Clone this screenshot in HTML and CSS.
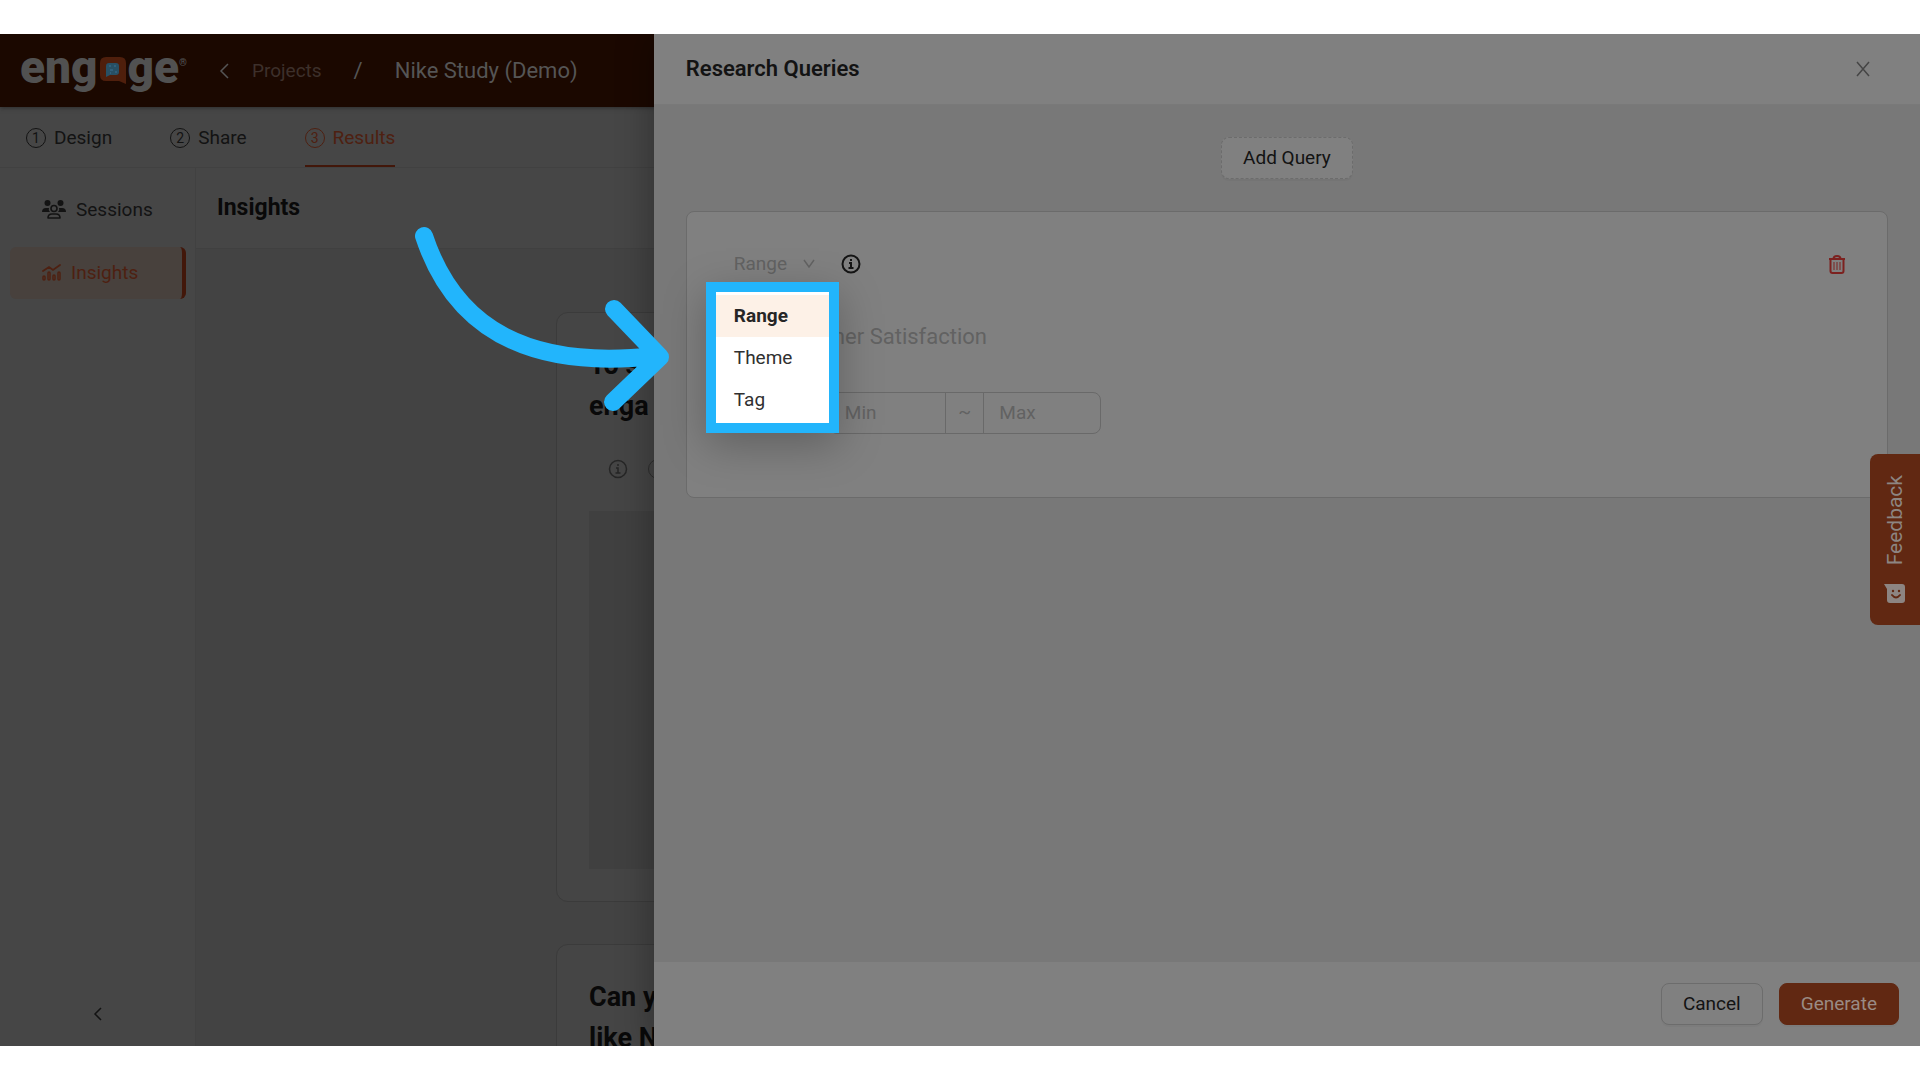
FILE: index.html
```
<!DOCTYPE html>
<html lang="en">
<head>
<meta charset="utf-8">
<meta name="viewport" content="width=device-width, initial-scale=1">
<title>Engage – Research Queries</title>
<link rel="stylesheet" href="styles.css">
</head>
<body>
<div class="stage">
  <div class="app">
    <header class="topbar">
      <a class="logo" href="#" aria-label="engage">
        <span>eng</span>
        <svg class="logo-mark" width="26" height="27" viewBox="0 0 26 27" aria-hidden="true">
          <path d="M6 0h14q6 0 6 6v21l-7-3H6q-6 0-6-6V6q0-6 6-6z" fill="#4f1f0c"/>
          <path d="M9 6h7q3 0 3 3v6q0 3-3 3h-6l-4 2V9q0-3 3-3z" fill="#285064"/>
          <path d="M9 9h2m3 0h2m-6 4h3m2 2h2m-7 1h1" stroke="#3a7191" stroke-width="1"/>
        </svg>
        <span>ge</span><sup>®</sup>
      </a>
      <nav class="crumbs">
        <a class="crumb-back" href="#">
          <svg width="10" height="16" viewBox="0 0 10 16" aria-hidden="true"><path d="M9 1L2 8l7 7" /></svg>
          <span>Projects</span>
        </a>
        <span class="slash">/</span>
        <span class="crumb-current">Nike Study (Demo)</span>
      </nav>
    </header>
    <nav class="tabs">
      <a class="tab" href="#"><span class="num">1</span>Design</a>
      <a class="tab" href="#"><span class="num">2</span>Share</a>
      <a class="tab active" href="#"><span class="num">3</span>Results</a>
    </nav>
    <div class="columns">
      <aside class="sidebar">
        <a class="side-item" href="#">
          <svg width="24" height="20" viewBox="0 0 24 20" aria-hidden="true">
            <circle cx="5.500" cy="3" r="3" fill="currentColor"/><circle cx="18.500" cy="3" r="3" fill="currentColor"/>
            <path d="M0 12q0-4 4-4h3q-1 2 1 4zM24 12q0-4-4-4h-3q1 2-1 4z" fill="currentColor"/>
            <circle cx="12" cy="8.500" r="3" fill="none" stroke="currentColor" stroke-width="1.600"/>
            <path d="M6 18q0-4 4-4h4q4 0 4 4z" fill="none" stroke="currentColor" stroke-width="1.600" stroke-linejoin="round"/>
          </svg>
          Sessions
        </a>
        <a class="side-item selected" href="#">
          <svg width="19" height="18" viewBox="0 0 19 18" fill="none" stroke="currentColor" stroke-width="1.500" aria-hidden="true">
            <path d="M1 7l6-4 4 3 7-5" stroke-linecap="round" stroke-width="1.800"/>
            <rect x="1" y="12" width="2" height="4" rx="1"/><rect x="6" y="8" width="2" height="8" rx="1"/><rect x="11" y="11" width="2" height="5" rx="1"/><rect x="16" y="8" width="2" height="8" rx="1"/>
          </svg>
          Insights
        </a>
        <button class="collapse" type="button" aria-label="Collapse">
          <svg width="10" height="14" viewBox="0 0 10 14" aria-hidden="true"><path d="M8 1L2 7l6 6"/></svg>
        </button>
      </aside>
      <main class="content">
        <h1 class="page-title">Insights</h1>
        <div class="feed">
          <article class="question">
            <h2>To s<br>enga</h2>
            <div class="tools">
              <svg class="info" width="20" height="20" viewBox="0 0 20 20" aria-hidden="true"><circle cx="10" cy="10" r="8.500"/><path d="M10 5v2M8 9h2v5M7.500 14h5"/></svg>
              <span class="dot"></span>
            </div>
            <div class="placeholder"></div>
          </article>
          <article class="question">
            <h2>Can y<br>like N</h2>
          </article>
        </div>
      </main>
    </div>
  </div>

  <section class="drawer">
    <header class="drawer-head">
      <h2>Research Queries</h2>
      <button class="close" type="button" aria-label="Close"><svg width="14" height="16" viewBox="0 0 14 16" aria-hidden="true"><path d="M1 1l12 14M13 1L1 15"/></svg></button>
    </header>
    <div class="drawer-body">
      <button class="btn add" type="button">Add Query</button>
      <form class="query">
        <div class="query-top">
          <div class="type-wrap">
            <button class="type" type="button">Range
              <svg width="12" height="10" viewBox="0 0 12 10" aria-hidden="true"><path d="M1 1l5 7 5-7"/></svg>
            </button>
            <ul class="menu">
              <li><button class="option chosen" type="button">Range</button></li>
              <li><button class="option" type="button">Theme</button></li>
              <li><button class="option" type="button">Tag</button></li>
            </ul>
          </div>
          <svg class="info strong" width="20" height="20" viewBox="0 0 20 20" aria-hidden="true"><circle cx="10" cy="10" r="8.500"/><path d="M10 5v2M8 9h2v5M7.500 14h5"/></svg>
          <button class="trash" type="button" aria-label="Delete query">
            <svg width="16" height="19" viewBox="0 0 16 19" aria-hidden="true"><path d="M0 4h16M4.500 4q0-3 3.500-3t3.500 3M1.500 4v12q0 2 2 2h9q2 0 2-2V4"/><path class="thin" d="M5 7v8M8 7v8M11 7v8"/></svg>
          </button>
        </div>
        <input class="query-name" type="text" aria-label="Query name" placeholder="Ex. Customer Satisfaction">
        <div class="range">
          <input type="text" aria-label="Minimum" placeholder="Min">
          <span>~</span>
          <input type="text" aria-label="Maximum" placeholder="Max">
        </div>
      </form>
    </div>
    <footer class="drawer-foot">
      <button class="btn" type="button">Cancel</button>
      <button class="btn primary" type="button">Generate</button>
    </footer>
  </section>

  <button class="feedback" type="button">
    <span>Feedback</span>
    <svg width="22" height="20" viewBox="0 0 22 20" aria-hidden="true">
      <path d="M0 0h18q3 0 3 3v13q0 3-3 3H6q-3 0-3-3V5z" fill="#8d8582"/>
      <path d="M8 11q4 5 8 0" fill="none" stroke="#612812" stroke-width="2" stroke-linecap="round"/><circle cx="9" cy="7" r="1.200" fill="#612812"/><circle cx="15" cy="7" r="1.200" fill="#612812"/>
    </svg>
  </button>

  <svg class="arrow" width="260" height="200" viewBox="412 222 260 200" aria-hidden="true">
    <path d="M424 236C455 330 530 370 655 356M614 309l46 48-47 45"/>
  </svg>
</div>
</body>
</html>
```
FILE: styles.css
```
* { box-sizing: border-box; }
body {
  margin: 0;
  padding: 34px 0;
  background: #fff;
  color: #131313;
  font: 18px/28px Roboto, "Liberation Sans", sans-serif;
}
a { color: inherit; text-decoration: none; }
button, input { font: inherit; color: inherit; }
button { padding: 0; border: 0; background: none; }
h1, h2, ul { margin: 0; padding: 0; }
svg { flex: none; fill: none; }

.stage {
  position: relative;
  height: calc(100vh - 68px);
  overflow: hidden;
  background: #464646;
}
.app { display: flex; flex-direction: column; height: 100%; }

.topbar {
  display: flex;
  align-items: center;
  gap: 32px;
  flex: none;
  height: 73px;
  padding-left: 20px;
  background: #1b0800;
  box-shadow: 0 1px 4px #2c2c2c;
  z-index: 1;
}
.logo {
  display: flex;
  align-items: center;
  gap: 2px;
  color: #515151;
  font-size: 46px;
  font-weight: 900;
  line-height: 60px;
}
.logo span { margin-top: -8px; }
.logo sup { align-self: flex-start; font-size: 10px; line-height: 36px; margin-left: -2px; }
.crumbs { display: flex; align-items: center; gap: 32px; font-size: 22px; color: #555; }
.crumb-back { display: flex; align-items: center; gap: 23px; color: #3d302b; font-size: 19px; }
.crumb-back svg path { stroke: #555; stroke-width: 1.500; }

.tabs {
  display: flex;
  gap: 58px;
  flex: none;
  height: 61px;
  padding-left: 26px;
  border-bottom: 1px solid #414141;
  font-size: 19px;
}
.tab { display: flex; align-items: center; gap: 8px; padding-top: 4px; border-bottom: 2px solid transparent; }
.tab.active { color: #4e2011; border-color: #42170a; }
.num {
  display: grid;
  place-items: center;
  width: 20px;
  height: 20px;
  border: 1px solid;
  border-radius: 50%;
  font-size: 14px;
  line-height: 18px;
}

.columns { display: flex; flex: 1; min-height: 0; }
.sidebar {
  display: flex;
  flex-direction: column;
  gap: 11px;
  width: 196px;
  padding: 16px 9px 17px 10px;
  border-right: 1px solid #414141;
  font-size: 19px;
}
.side-item { display: flex; align-items: center; gap: 10px; height: 52px; padding-left: 32px; border-radius: 6px; }
.selected { background: #48413d; color: #4e2011; border-right: 4px solid #42170a; }
.collapse { margin-top: auto; }
.collapse path { stroke: #131313; stroke-width: 1.500; }

.content { flex: 1; display: flex; flex-direction: column; min-width: 0; }
.page-title {
  flex: none;
  height: 81px;
  padding: 26px 21px;
  border-bottom: 1px solid #404040;
  color: #090909;
  font-size: 23px;
  line-height: 28px;
}
.feed {
  flex: 1;
  display: flex;
  flex-direction: column;
  gap: 42px;
  min-height: 0;
  padding-top: 63px;
  background: #434343;
}
.question {
  flex: none;
  width: 1004px;
  max-width: 100%;
  margin: 0 auto;
  padding: 32px;
  border: 1px solid #3b3b3b;
  border-radius: 12px;
  background: #454545;
}
.question h2 { font-size: 27px; line-height: 41px; color: #090909; }
.tools { display: flex; gap: 20px; padding: 32px 19px; }
.info circle, .info path { stroke: #262626; stroke-width: 1.500; }
.info.strong circle, .info.strong path { stroke: #151515; stroke-width: 2; }
.dot { width: 20px; height: 20px; border: 1px solid #2e2e2e; border-radius: 50%; }
.placeholder { height: 358px; background: #404040; }

.drawer {
  position: absolute;
  inset: 0 0 0 auto;
  display: flex;
  flex-direction: column;
  width: calc(66% - 1px);
  background: #808080;
  box-shadow: -6px 0 30px rgba(0, 0, 0, .25);
  z-index: 2;
}
.drawer-head {
  display: flex;
  align-items: center;
  justify-content: space-between;
  height: 71px;
  padding: 0 50px 0 32px;
  border-bottom: 1px solid #797979;
}
.drawer-head h2 { font-size: 22px; font-weight: 600; }
.close { display: flex; }
.close path { stroke: #454545; stroke-width: 1.500; }
.drawer-body {
  flex: 1;
  display: flex;
  flex-direction: column;
  align-items: center;
  gap: 32px;
  padding: 32px;
  background: #787878;
}
.btn {
  height: 42px;
  padding: 0 21px;
  border: 1px solid #6c6c6c;
  border-radius: 8px;
  background: #808080;
  font-size: 19px;
  box-shadow: 0 2px 1px rgba(0, 0, 0, .03);
}
.add { border-style: dashed; }
.primary { background: #612812; border-color: #612812; color: #9a8b84; }

.query {
  display: flex;
  flex-direction: column;
  width: 100%;
  padding: 31px 42px 63px 47px;
  border: 1px solid #6b6b6b;
  border-radius: 8px;
  background: #808080;
}
.query-top { display: flex; align-items: center; gap: 26px; height: 42px; }
.type-wrap { position: relative; }
.type { display: flex; align-items: center; gap: 16px; color: #626262; font-size: 19px; }
.type path { stroke: #626262; stroke-width: 1.500; }
.trash { display: flex; margin-left: auto; }
.trash path { stroke: #7c211f; stroke-width: 2; }
.trash .thin { stroke-width: 1; }
.menu {
  position: absolute;
  top: 32px;
  left: -28px;
  width: 133px;
  height: 151px;
  padding-top: 3px;
  border: 10px solid #22b5fc;
  background: #fff;
  list-style: none;
  box-shadow: 0 12px 40px rgba(0, 0, 0, .25);
  z-index: 3;
}
.option { display: block; width: 100%; height: 42px; padding-left: 18px; text-align: left; font-size: 19px; color: #303030; }
.chosen { background: #fdf1e7; font-weight: 700; color: #262626; }

input { border: 0; background: none; outline: 0; }
input::placeholder { color: #626262; opacity: 1; }
.query-name { height: 42px; margin-top: 30px; padding: 0; font-size: 22px; }
.range {
  display: flex;
  align-self: flex-start;
  width: 272px;
  height: 42px;
  margin: 35px 0 0 95px;
  border: 1px solid #696969;
  border-radius: 8px;
  font-size: 19px;
}
.range input { flex: 1; min-width: 0; padding: 0 15px; }
.range span { width: 39px; border: solid #696969; border-width: 0 1px; color: #626262; text-align: center; line-height: 38px; }

.drawer-foot {
  display: flex;
  align-items: center;
  justify-content: flex-end;
  gap: 16px;
  height: 84px;
  padding-right: 21px;
}

.feedback {
  position: absolute;
  top: 420px;
  right: 0;
  display: flex;
  flex-direction: column;
  align-items: center;
  justify-content: center;
  gap: 18px;
  width: 50px;
  height: 171px;
  border-radius: 8px 0 0 8px;
  background: #612812;
  color: #8d8582;
  font-size: 21px;
  z-index: 4;
}
.feedback span { writing-mode: vertical-rl; transform: rotate(180deg); }

.arrow { position: absolute; top: 188px; left: 412px; z-index: 5; }
.arrow path { stroke: #22b5fc; stroke-width: 18; stroke-linecap: round; stroke-linejoin: round; }
```
